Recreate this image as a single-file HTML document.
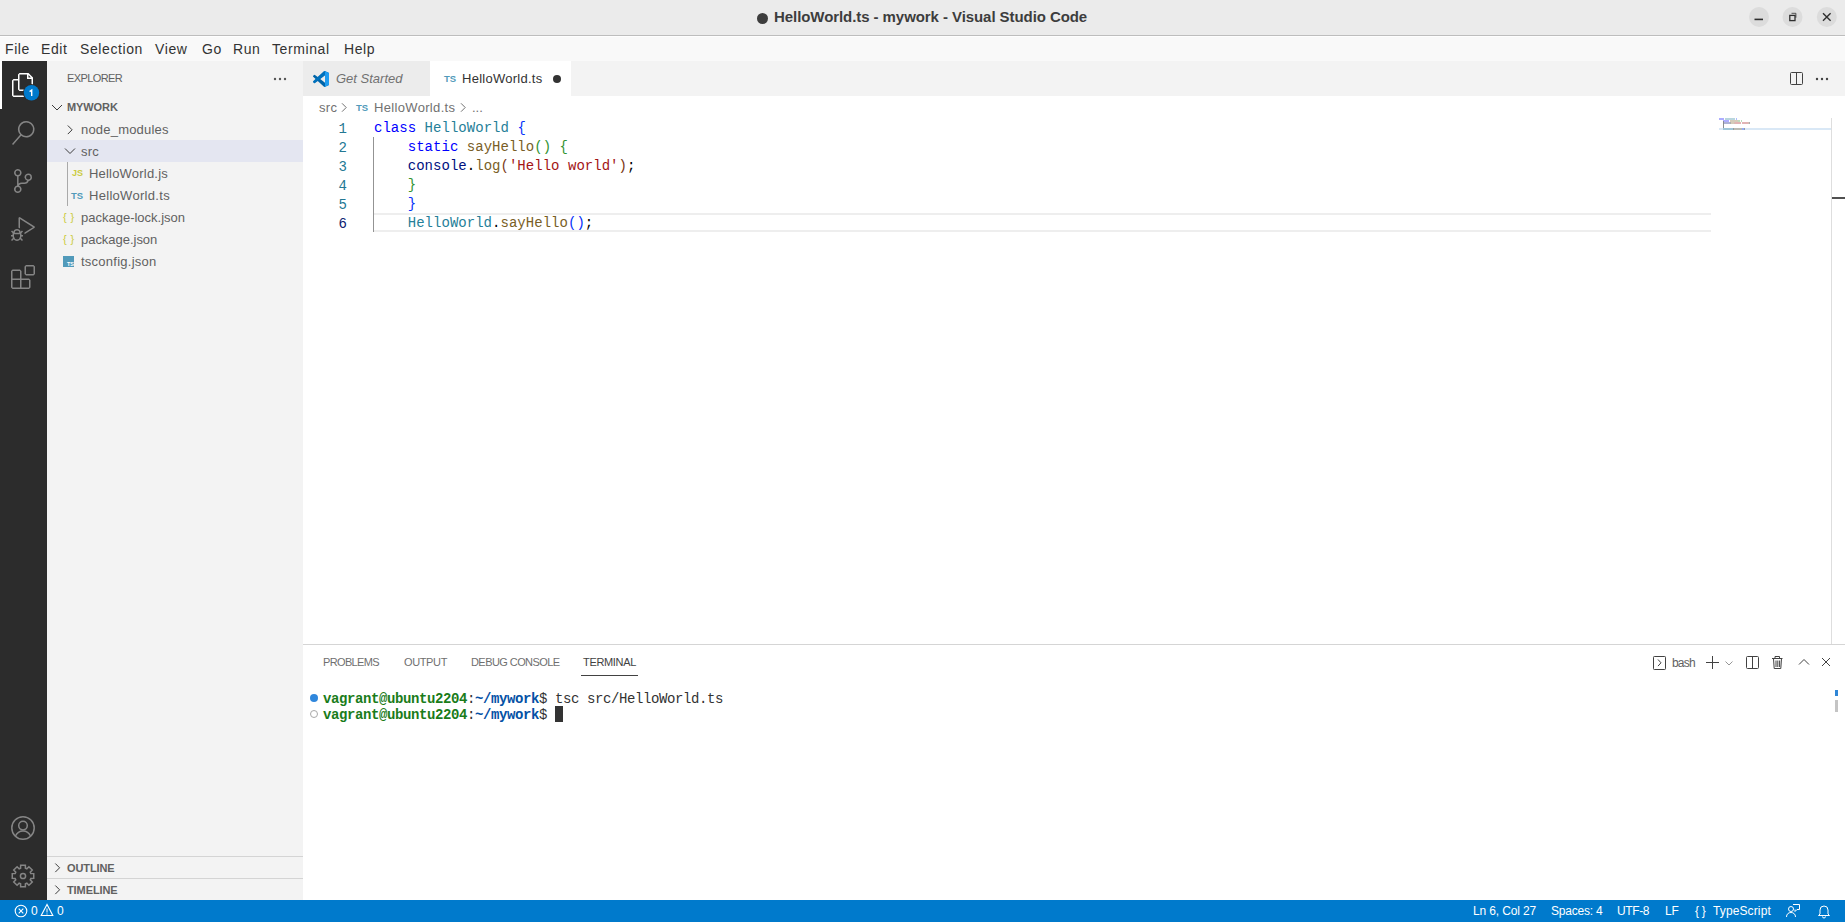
<!DOCTYPE html>
<html><head><meta charset="utf-8">
<style>
*{box-sizing:border-box;margin:0;padding:0}
html,body{width:1845px;height:923px;overflow:hidden;background:#fff;font-family:"Liberation Sans",sans-serif;font-size:13px;color:#616161}
.a{position:absolute;white-space:pre;line-height:1}
#title{left:0;top:0;width:1845px;height:36px;background:#ebebeb;border-bottom:1px solid #bdbdbd}
#menu{left:0;top:36px;width:1845px;height:25px;background:#f9f9f9;border-top:1px solid #fefefe}
#act{left:0;top:61px;width:47px;height:839px;background:#2c2c2c}
#side{left:47px;top:61px;width:256px;height:839px;background:#f3f3f3}
#tabs{left:303px;top:61px;width:1542px;height:35px;background:#f3f3f3}
#editor{left:303px;top:96px;width:1542px;height:548px;background:#fff}
#panel{left:303px;top:644px;width:1542px;height:256px;background:#fff;border-top:1px solid #d5d5d5}
#status{left:0;top:900px;width:1845px;height:22px;background:#007acc;color:#fff}
.mono{font-family:"Liberation Mono",monospace}
.menu{font-size:14px;color:#333;top:42px;letter-spacing:0.6px}
.tree{font-size:13px;color:#616161;letter-spacing:0.2px}
.st{font-size:12px;color:#fff;top:905px;letter-spacing:0.3px}
svg{position:absolute}
</style></head><body>
<div id="title" class="a"></div>
<div id="menu" class="a"></div>
<div id="act" class="a"></div>
<div id="side" class="a"></div>
<div id="tabs" class="a"></div>
<div id="editor" class="a"></div>
<div id="panel" class="a"></div>
<div id="status" class="a"></div>

<!-- TITLE -->
<div class="a" style="left:757px;top:13px;width:11px;height:11px;border-radius:50%;background:#3d3d3d"></div>
<div class="a" style="left:774px;top:9px;font-weight:bold;font-size:15px;color:#3d3d3d;letter-spacing:-0.07px">HelloWorld.ts - mywork - Visual Studio Code</div>
<svg style="left:1738px;top:7px" width="100" height="22" viewBox="0 0 100 22">
 <circle cx="21" cy="10" r="10" fill="#dcdcdc"/>
 <rect x="16.5" y="11.6" width="8.5" height="1.6" fill="#2e2e2e"/>
 <circle cx="54.5" cy="10" r="10" fill="#dcdcdc"/>
 <rect x="51.8" y="8.4" width="5.2" height="5.2" fill="none" stroke="#2e2e2e" stroke-width="1.3"/>
 <path d="M53.5 6.3h4.4v4.4" fill="none" stroke="#2e2e2e" stroke-width="0.8"/>
 <circle cx="88.8" cy="10" r="10" fill="#dcdcdc"/>
 <path d="M85 6.2l7.6 7.6M92.6 6.2l-7.6 7.6" stroke="#2e2e2e" stroke-width="1.4"/>
</svg>

<!-- MENU -->
<div class="a menu" style="left:5px">File</div>
<div class="a menu" style="left:41px">Edit</div>
<div class="a menu" style="left:80px">Selection</div>
<div class="a menu" style="left:155px">View</div>
<div class="a menu" style="left:202px">Go</div>
<div class="a menu" style="left:233px">Run</div>
<div class="a menu" style="left:272px">Terminal</div>
<div class="a menu" style="left:344px">Help</div>

<!-- ACTIVITY BAR -->
<div class="a" style="left:0;top:61px;width:2px;height:48px;background:#fff"></div>
<svg style="left:11px;top:73px" width="24" height="24" viewBox="0 0 24 24"><path fill="#fff" d="M17.5 0h-9L7 1.5V6H2.5L1 7.5v15.07L2.5 24h12.07L16 22.57V18h4.7l1.3-1.43V4.5L17.5 0zm0 2.12l2.38 2.38H17.5V2.12zm-3 20.38h-12v-15H7v9.07L8.5 18h6v4.5zm6-6h-12v-15H16V6h4.5v10.5z"/></svg>
<svg style="left:20px;top:81px" width="24" height="24" viewBox="0 0 24 24"><circle cx="11.5" cy="11.7" r="8.6" fill="#2c2c2c"/><circle cx="11.5" cy="11.7" r="7.7" fill="#007acc"/><path d="M9.6 10.6l2.1-1.5v6" fill="none" stroke="#fff" stroke-width="1.4"/></svg>

<svg style="left:11px;top:121px" width="24" height="24" viewBox="0 0 24 24"><path fill="#858585" d="M15.25 0a8.25 8.25 0 0 0-6.18 13.72L1 22.88l1.12 1 8.05-9.12A8.251 8.251 0 1 0 15.25.01V0zm0 15a6.75 6.75 0 1 1 0-13.5 6.75 6.75 0 0 1 0 13.5z"/></svg>
<svg style="left:11px;top:169px" width="24" height="24" viewBox="0 0 24 24"><path fill="#858585" d="M21.007 8.222A3.738 3.738 0 0 0 15.045 5.2a3.737 3.737 0 0 0 1.156 6.583 2.988 2.988 0 0 1-2.668 1.67h-2.99a4.456 4.456 0 0 0-2.989 1.165V7.4a3.737 3.737 0 1 0-1.494 0v9.117a3.776 3.776 0 1 0 1.816.099 2.99 2.99 0 0 1 2.668-1.667h2.99a4.484 4.484 0 0 0 4.223-3.039 3.736 3.736 0 0 0 3.25-3.687zM4.565 3.738a2.242 2.242 0 1 1 4.484 0 2.242 2.242 0 0 1-4.484 0zm4.484 16.441a2.242 2.242 0 1 1-4.484 0 2.242 2.242 0 0 1 4.484 0zm8.221-9.715a2.242 2.242 0 1 1 0-4.485 2.242 2.242 0 0 1 0 4.485z"/></svg>
<svg style="left:11px;top:217px" width="24" height="24" viewBox="0 0 24 24"><path fill="#858585" d="M10.94 13.5l-1.32 1.32a3.73 3.73 0 0 0-7.24 0L1.06 13.5 0 14.56l1.72 1.72-.22.22V18H0v1.5h1.5v.08c.077.489.214.966.41 1.42L0 22.94 1.06 24l1.65-1.650A4.308 4.308 0 0 0 6 24a4.31 4.31 0 0 0 3.290-1.65L10.94 24 12 22.94 10.09 21c.198-.464.336-.951.41-1.45v-.1H12V18h-1.5v-1.5l-.22-.22L12 14.56l-1.06-1.06zM6 13.5a2.25 2.25 0 0 1 2.25 2.25h-4.5A2.25 2.25 0 0 1 6 13.5zm3 6a3.33 3.33 0 0 1-3 3 3.33 3.33 0 0 1-3-3v-2.25h6v2.25zm14.76-9.9v1.26L13.5 17.37V15.6l8.5-5.37L9 2v9.46a5.070 5.07 0 0 0-1.5-.72V.63L8.64 0l15.12 9.6z"/></svg>
<svg style="left:11px;top:265px" width="24" height="24" viewBox="0 0 24 24"><path fill="#858585" d="M13.5 1.5L15 0h7.5L24 1.5V9l-1.5 1.5H15L13.5 9V1.5zm1.5 0V9h7.5V1.5H15zM0 15V6l1.5-1.5H9L10.5 6v7.5H18l1.5 1.5v7.5L18 24H1.5L0 22.5V15zm9-1.5V6H1.5v7.5H9zM9 15H1.5v7.5H9V15zm1.5 7.5H18V15h-7.5v7.5z"/></svg>
<svg style="left:11px;top:816px" width="24" height="24" viewBox="0 0 24 24"><circle cx="12" cy="12" r="11.2" fill="none" stroke="#858585" stroke-width="1.5"/><circle cx="12" cy="9.6" r="4.3" fill="none" stroke="#858585" stroke-width="1.5"/><path d="M4.3 20.3C5.8 17 8.6 15 12 15s6.2 2 7.7 5.3" fill="none" stroke="#858585" stroke-width="1.5"/></svg>
<svg style="left:11px;top:864px" width="24" height="24" viewBox="0 0 24 24"><path fill="none" stroke="#858585" stroke-width="1.5" stroke-linejoin="miter" d="M9.60 4.16 L9.62 1.26 L14.38 1.26 L14.40 4.16 L15.85 4.76 L17.91 2.72 L21.28 6.09 L19.24 8.15 L19.84 9.60 L22.74 9.62 L22.74 14.38 L19.84 14.40 L19.24 15.85 L21.28 17.91 L17.91 21.28 L15.85 19.24 L14.40 19.84 L14.38 22.74 L9.62 22.74 L9.60 19.84 L8.15 19.24 L6.09 21.28 L2.72 17.91 L4.76 15.85 L4.16 14.40 L1.26 14.38 L1.26 9.62 L4.16 9.60 L4.76 8.15 L2.72 6.09 L6.09 2.72 L8.15 4.76Z"/><circle cx="12" cy="12" r="2.6" fill="none" stroke="#858585" stroke-width="1.5"/></svg>

<!-- SIDEBAR -->
<div class="a" style="left:67px;top:73px;font-size:11px;color:#616161;letter-spacing:-0.6px">EXPLORER</div>
<svg style="left:272px;top:77px" width="16" height="4" viewBox="0 0 16 4"><circle cx="3" cy="2" r="1.2" fill="#555"/><circle cx="8" cy="2" r="1.2" fill="#555"/><circle cx="13" cy="2" r="1.2" fill="#555"/></svg>
<svg style="left:50px;top:100px" width="16" height="16" viewBox="0 0 16 16"><path d="M2 5l5 5 5-5" fill="none" stroke="#3c3c3c" stroke-width="1"/></svg>
<div class="a" style="left:67px;top:102px;font-size:11px;font-weight:bold;color:#616161;letter-spacing:-0.1px">MYWORK</div>
<svg style="left:62px;top:121px" width="16" height="16" viewBox="0 0 16 16"><path d="M5.8 4.5l4.3 4.3-4.3 4.3" fill="none" stroke="#3c3c3c" stroke-width="1"/></svg>
<div class="a tree" style="left:81px;top:123px">node_modules</div>
<div class="a" style="left:47px;top:140px;width:256px;height:22px;background:#e4e6f1"></div>
<svg style="left:62px;top:143px" width="16" height="16" viewBox="0 0 16 16"><path d="M3 5.5l5 5 5-5" fill="none" stroke="#3c3c3c" stroke-width="1"/></svg>
<div class="a tree" style="left:81px;top:145px">src</div>
<div class="a" style="left:67px;top:162px;width:1px;height:44px;background:#a9a9a9"></div>
<div class="a" style="left:72px;top:169px;font-size:9px;font-weight:bold;color:#cbcb41">JS</div>
<div class="a tree" style="left:89px;top:167px">HelloWorld.js</div>
<div class="a" style="left:71px;top:191px;font-size:9.5px;font-weight:bold;color:#519aba">TS</div>
<div class="a tree" style="left:89px;top:189px;letter-spacing:0.3px">HelloWorld.ts</div>
<div class="a" style="left:63px;top:212px;font-size:11px;color:#cbcb41;letter-spacing:3.8px">{}</div>
<div class="a tree" style="left:81px;top:211px;letter-spacing:0px">package-lock.json</div>
<div class="a" style="left:63px;top:234px;font-size:11px;color:#cbcb41;letter-spacing:3.8px">{}</div>
<div class="a tree" style="left:81px;top:233px;letter-spacing:-0.03px">package.json</div>
<div class="a" style="left:63px;top:256px;width:11px;height:11px;background:#519aba"></div>
<div class="a" style="left:67px;top:261px;font-size:5.5px;line-height:6px;font-weight:bold;color:#fff">TS</div>
<div class="a tree" style="left:81px;top:255px;letter-spacing:0.25px">tsconfig.json</div>

<div class="a" style="left:47px;top:856px;width:256px;height:1px;background:#d4d4d4"></div>
<svg style="left:51px;top:860px" width="16" height="16" viewBox="0 0 16 16"><path d="M4.3 3.5l4.3 4.3-4.3 4.3" fill="none" stroke="#3c3c3c" stroke-width="1"/></svg>
<div class="a" style="left:67px;top:863px;font-size:11px;font-weight:bold;color:#616161;letter-spacing:-0.1px">OUTLINE</div>
<div class="a" style="left:47px;top:878px;width:256px;height:1px;background:#d4d4d4"></div>
<svg style="left:51px;top:882px" width="16" height="16" viewBox="0 0 16 16"><path d="M4.3 3.5l4.3 4.3-4.3 4.3" fill="none" stroke="#3c3c3c" stroke-width="1"/></svg>
<div class="a" style="left:67px;top:885px;font-size:11px;font-weight:bold;color:#616161;letter-spacing:-0.1px">TIMELINE</div>

<!-- TABS -->
<div class="a" style="left:303px;top:61px;width:127px;height:35px;background:#ececec"></div>
<svg style="left:313px;top:71px" width="16" height="16" viewBox="0 0 100 100"><path fill="#0065a9" d="M96.5 10.8L75.9.9a6.2 6.2 0 0 0-7.1 1.2L29.4 38.1 12.2 25.1a4.2 4.2 0 0 0-5.3.2L1.4 30.3a4.2 4.2 0 0 0 0 6.2L16.3 50 1.4 63.5a4.2 4.2 0 0 0 0 6.2l5.5 5a4.2 4.2 0 0 0 5.3.2l17.2-13L68.8 98a6.2 6.2 0 0 0 7.1 1.2l20.6-9.9A6.2 6.2 0 0 0 100 83.7V16.3a6.2 6.2 0 0 0-3.5-5.5zM75 72.7L45.1 50 75 27.3z"/><path fill="#007acc" d="M96.5 10.8L75.9.9a6.2 6.2 0 0 0-7.1 1.2L1.4 63.5a4.2 4.2 0 0 0 0 6.2l5.5 5a4.2 4.2 0 0 0 5.3.2L93.6 13a4.2 4.2 0 0 1 6.4 3.3v-.2a6.2 6.2 0 0 0-3.5-5.3z" opacity=".6"/><path fill="#1f9cf0" d="M75.9 99.1a6.2 6.2 0 0 1-7.1-1.2 3.6 3.6 0 0 0 6.2-2.600V4.7a3.6 3.6 0 0 0-6.200-2.6 6.2 6.2 0 0 1 7.1-1.2l20.600 9.9A6.2 6.2 0 0 1 100 16.3v67.4a6.2 6.2 0 0 1-3.5 5.6z"/></svg>
<div class="a" style="left:336px;top:72px;font-size:13px;font-style:italic;color:#717171;letter-spacing:0px">Get Started</div>
<div class="a" style="left:430px;top:61px;width:141px;height:35px;background:#fff"></div>
<div class="a" style="left:444px;top:74px;font-size:9.5px;font-weight:bold;color:#519aba">TS</div>
<div class="a" style="left:462px;top:72px;font-size:13px;color:#333;letter-spacing:0.26px">HelloWorld.ts</div>
<div class="a" style="left:553px;top:75px;width:8px;height:8px;border-radius:50%;background:#333"></div>
<!-- split / more -->
<svg style="left:1788px;top:70px" width="16" height="16" viewBox="0 0 16 16"><rect x="2.5" y="2.5" width="12" height="12" rx="1" fill="none" stroke="#424242" stroke-width="1"/><path d="M8.5 2.5v12" stroke="#424242" stroke-width="1"/></svg>
<svg style="left:1814px;top:77px" width="16" height="4" viewBox="0 0 16 4"><circle cx="3" cy="2" r="1.2" fill="#424242"/><circle cx="8" cy="2" r="1.2" fill="#424242"/><circle cx="13" cy="2" r="1.2" fill="#424242"/></svg>

<!-- BREADCRUMBS -->
<div class="a" style="left:319px;top:101px;font-size:13px;color:#717171;letter-spacing:0.3px">src</div>
<svg style="left:336px;top:99px" width="16" height="16" viewBox="0 0 16 16"><path d="M6 4.3l4.2 4.2-4.2 4.2" fill="none" stroke="#717171" stroke-width="1"/></svg>
<div class="a" style="left:356px;top:103px;font-size:9.5px;font-weight:bold;color:#519aba">TS</div>
<div class="a" style="left:374px;top:101px;font-size:13px;color:#717171;letter-spacing:0.33px">HelloWorld.ts</div>
<svg style="left:455px;top:99px" width="16" height="16" viewBox="0 0 16 16"><path d="M6 4.3l4.2 4.2-4.2 4.2" fill="none" stroke="#717171" stroke-width="1"/></svg>
<div class="a" style="left:472px;top:101px;font-size:13px;color:#717171">...</div>

<!-- EDITOR -->
<div class="a" style="left:374px;top:213px;width:1337px;height:19px;border-top:2px solid #eeeeee;border-bottom:2px solid #eeeeee"></div>
<div class="a" style="left:373px;top:137px;width:1px;height:95px;background:#939393"></div>
<div class="a mono" style="left:303px;top:120px;width:44px;text-align:right;font-size:14px;line-height:19px;color:#237893">1<br>2<br>3<br>4<br>5<br><span style="color:#0b216f">6</span></div>
<div class="a mono" style="left:374px;top:119px;font-size:14px;line-height:19px;color:#000;letter-spacing:0.03px"><span style="color:#0000ff">class</span> <span style="color:#267f99">HelloWorld</span> <span style="color:#0431fa">{</span>
    <span style="color:#0000ff">static</span> <span style="color:#795e26">sayHello</span><span style="color:#319331">()</span> <span style="color:#319331">{</span>
    <span style="color:#001080">console</span>.<span style="color:#795e26">log</span><span style="color:#7b3814">(</span><span style="color:#a31515">'Hello world'</span><span style="color:#7b3814">)</span>;
    <span style="color:#319331">}</span>
    <span style="color:#0431fa">}</span>
    <span style="color:#267f99">HelloWorld</span>.<span style="color:#795e26">sayHello</span><span style="color:#0431fa">()</span>;</div>

<!-- MINIMAP -->
<svg style="left:1719px;top:118px" width="112" height="14" viewBox="0 0 112 14"><rect x="0" y="10" width="112" height="2" fill="#d9e8f6"/><rect x="0" y="0" width="5" height="2" fill="#0000ff" opacity="0.32"/><rect x="6" y="0" width="10" height="2" fill="#267f99" opacity="0.32"/><rect x="17" y="0" width="1" height="2" fill="#0431fa" opacity="0.32"/><rect x="4" y="2" width="6" height="2" fill="#0000ff" opacity="0.32"/><rect x="11" y="2" width="8" height="2" fill="#795e26" opacity="0.32"/><rect x="19" y="2" width="2" height="2" fill="#319331" opacity="0.32"/><rect x="22" y="2" width="1" height="2" fill="#319331" opacity="0.32"/><rect x="4" y="4" width="7" height="2" fill="#001080" opacity="0.32"/><rect x="11" y="4" width="1" height="2" fill="#000000" opacity="0.32"/><rect x="12" y="4" width="3" height="2" fill="#795e26" opacity="0.32"/><rect x="15" y="4" width="1" height="2" fill="#7b3814" opacity="0.32"/><rect x="16" y="4" width="6" height="2" fill="#a31515" opacity="0.32"/><rect x="23" y="4" width="6" height="2" fill="#a31515" opacity="0.32"/><rect x="29" y="4" width="1" height="2" fill="#7b3814" opacity="0.32"/><rect x="30" y="4" width="1" height="2" fill="#000000" opacity="0.32"/><rect x="4" y="6" width="1" height="2" fill="#319331" opacity="0.32"/><rect x="4" y="8" width="1" height="2" fill="#0431fa" opacity="0.32"/><rect x="4" y="10" width="10" height="2" fill="#267f99" opacity="0.32"/><rect x="14" y="10" width="1" height="2" fill="#000000" opacity="0.32"/><rect x="15" y="10" width="8" height="2" fill="#795e26" opacity="0.32"/><rect x="23" y="10" width="2" height="2" fill="#0431fa" opacity="0.32"/><rect x="25" y="10" width="1" height="2" fill="#000000" opacity="0.32"/><rect x="4" y="3" width="1" height="7" fill="#808080" opacity="0.8"/></svg>
<div class="a" style="left:1831px;top:118px;width:1px;height:526px;background:#dedede"></div>
<div class="a" style="left:1832px;top:197px;width:13px;height:2px;background:#505050"></div>

<!-- PANEL -->
<div class="a" style="left:323px;top:657px;font-size:11px;color:#6f6f6f;letter-spacing:-0.65px">PROBLEMS</div>
<div class="a" style="left:404px;top:657px;font-size:11px;color:#6f6f6f;letter-spacing:-0.37px">OUTPUT</div>
<div class="a" style="left:471px;top:657px;font-size:11px;color:#6f6f6f;letter-spacing:-0.57px">DEBUG CONSOLE</div>
<div class="a" style="left:583px;top:657px;font-size:11px;color:#424242;letter-spacing:-0.33px">TERMINAL</div>
<div class="a" style="left:581px;top:675px;width:57px;height:1px;background:#424242"></div>

<svg style="left:1640px;top:648px" width="205" height="30" viewBox="0 0 205 30" fill="none" stroke="#424242" stroke-width="1">
 <rect x="13.5" y="8.5" width="12" height="13" rx="0.8"/>
 <path d="M18 11.5l3 3.3-3 3.3"/>
 <path d="M72.5 8v13M66 14.5h13"/>
 <path d="M85.5 13.5l3.5 3.5 3.5-3.5" stroke="#8a8a8a" stroke-width="0.9"/>
 <rect x="106.5" y="8.5" width="12" height="12" rx="1"/>
 <path d="M112.5 8.5v12"/>
 <path d="M132 10.5h10.5M135 10.5V8.5h4.5v2M133.5 10.5l.7 10h6.6l.7-10M136 12.5v6.5M137.8 12.5v6.5M139.6 12.5v6.5"/>
 <path d="M159 16.5l5-5 5 5"/>
 <path d="M182 10l8 8M190 10l-8 8"/>
</svg>
<div class="a" style="left:1672px;top:657px;font-size:12px;color:#616161;letter-spacing:-0.8px">bash</div>
<div class="a" style="left:310px;top:694px;width:8px;height:8px;border-radius:50%;background:#2f87dc"></div>
<div class="a" style="left:310px;top:710px;width:8px;height:8px;border-radius:50%;border:1px solid #a8a8a8"></div>
<div class="a mono" style="left:323px;top:691px;font-size:14px;letter-spacing:-0.4px;line-height:16px;color:#333"><b style="color:#1a7c1a">vagrant@ubuntu2204</b>:<b style="color:#0451a5">~/mywork</b>$ tsc src/HelloWorld.ts
<b style="color:#1a7c1a">vagrant@ubuntu2204</b>:<b style="color:#0451a5">~/mywork</b>$ </div>
<div class="a" style="left:555px;top:706px;width:8px;height:16px;background:#333"></div>
<div class="a" style="left:1835px;top:690px;width:3px;height:6px;background:#2f86d6"></div>
<div class="a" style="left:1835px;top:700px;width:3px;height:12px;background:#c4c4c4"></div>

<!-- STATUS BAR -->
<svg style="left:14px;top:904px" width="14" height="14" viewBox="0 0 14 14"><circle cx="7" cy="7" r="5.8" fill="none" stroke="#fff" stroke-width="1.1"/><path d="M4.7 4.7l4.6 4.6M9.3 4.7l-4.6 4.6" stroke="#fff" stroke-width="1.1"/></svg>
<div class="a st" style="left:31px">0</div>
<svg style="left:40px;top:903px" width="14" height="14" viewBox="0 0 14 14"><path d="M7 1.5L1.2 12.5h11.6z" fill="none" stroke="#fff" stroke-width="1.1"/><path d="M7 5.5v4M7 10.5v1" stroke="#fff" stroke-width="1"/></svg>
<div class="a st" style="left:57px">0</div>
<div class="a st" style="left:1473px;letter-spacing:-0.13px">Ln 6, Col 27</div>
<div class="a st" style="left:1551px;letter-spacing:-0.22px">Spaces: 4</div>
<div class="a st" style="left:1617px;letter-spacing:-0.38px">UTF-8</div>
<div class="a st" style="left:1665px;letter-spacing:-0.2px">LF</div>
<div class="a st" style="left:1695px;letter-spacing:-0.3px">{ }</div>
<div class="a st" style="left:1713px;letter-spacing:0.12px">TypeScript</div>
<svg style="left:1785px;top:903px" width="16" height="16" viewBox="0 0 16 16"><circle cx="6" cy="6" r="2.5" fill="none" stroke="#fff" stroke-width="1"/><path d="M1.5 14c0-3 2-4.5 4.5-4.5S10.5 11 10.5 14M8 1.5h6.5v5H12l-2 2v-2" fill="none" stroke="#fff" stroke-width="1"/></svg>
<svg style="left:1816px;top:903px" width="16" height="16" viewBox="0 0 16 16"><path d="M4 11V7a4 4 0 0 1 8 0v4l1.5 1.5h-11zM6.5 13.5a1.5 1.5 0 0 0 3 0" fill="none" stroke="#fff" stroke-width="1"/></svg>
<div class="a" style="left:0;top:922px;width:1845px;height:1px;background:#fff"></div>

</body></html>
